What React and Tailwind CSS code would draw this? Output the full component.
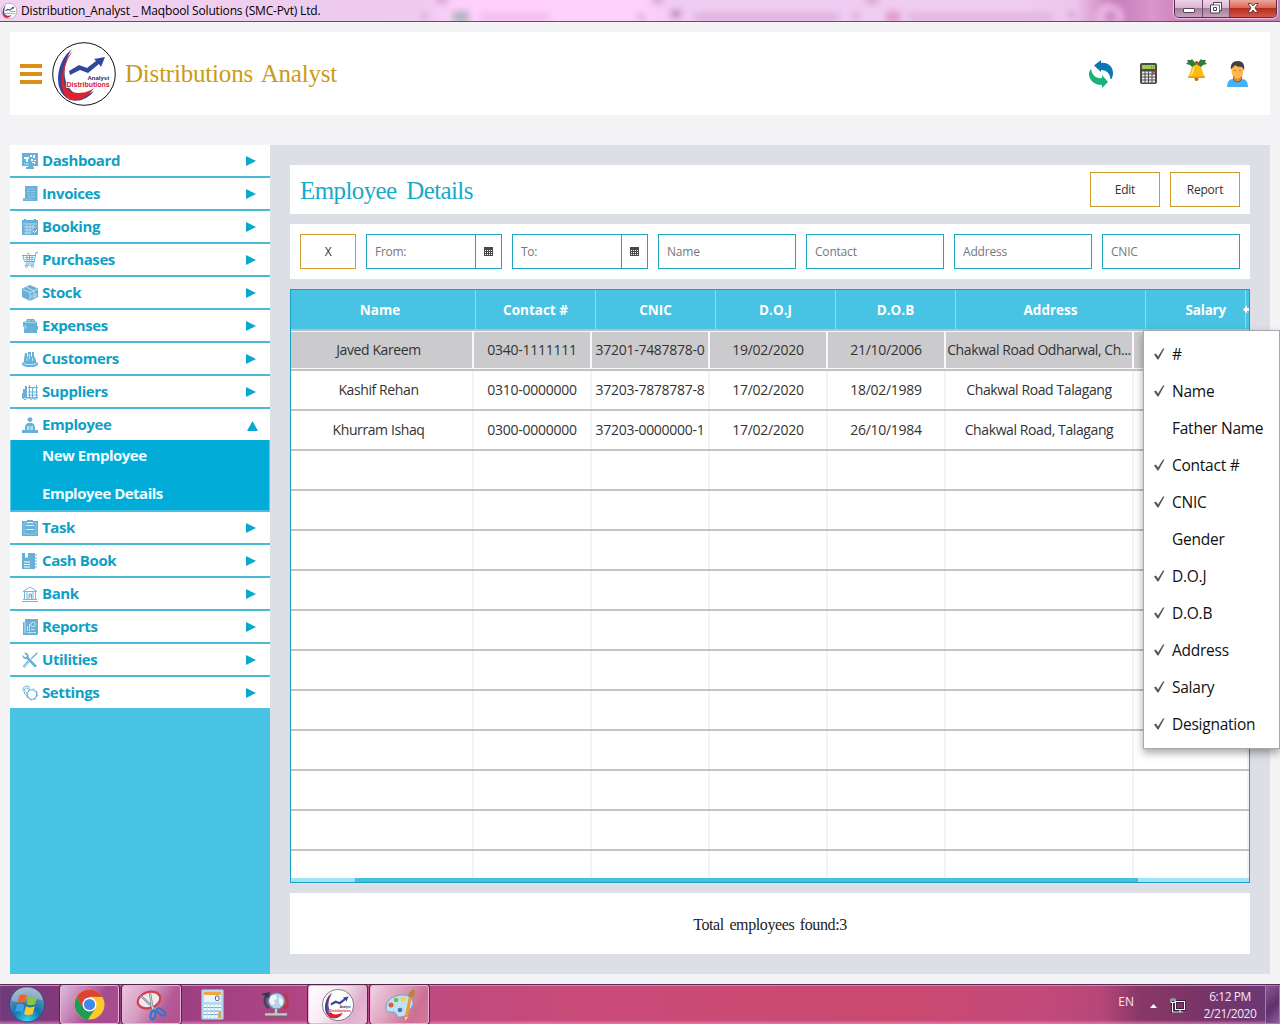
import React from "react";

const Svg = ({ children, className = "w-4 h-4", box = "0 0 16 16" }) => (
  <svg viewBox={box} className={className + " shrink-0"} fill="none">
    {children}
  </svg>
);

const B = "#67b0d8";

const icons = {
  Dashboard: (
    <Svg>
      <path d="M0 0h16v13h-5v1h1v2H4v-2h2v-1H0z" fill={B} />
      <path d="M2 4h5v2H6v3H4V6H2zM8 2h2v2H8zM11 2h2v3h-2zM9 6h2v2H9zM12 7h2v1h-2zM10 9h3v2h-1v-1h-2z" fill="#fff" />
      <path d="M2 11h5" stroke="#b8e0f0" />
    </Svg>
  ),
  Invoices: (
    <Svg>
      <path d="M3 0h12.500v15H1v-3h2z" fill={B} />
      <path d="M5 3h8M5 5.500h3M9 5.500h4M5 8h3M9 8h4M6 10.500h7M1 13h10" stroke="#a5d3ea" strokeWidth=".7" />
    </Svg>
  ),
  Booking: (
    <Svg>
      <path d="M0 1h2V0h2v1h8V0h2v1h2v15H0z" fill={B} />
      <path d="M1 5h14M2 8h12M2 11h9M2 14h7M5 6v9M8 6v9M11 6v4" stroke="#e2f1f8" strokeWidth=".7" />
      <path d="M11 12l1.500 1.500L15 11" stroke="#fff" />
    </Svg>
  ),
  Purchases: (
    <Svg>
      <path d="M16 .5h-2L12 11H3.500M0 3.500h13M1 4l1.500 5.500H12M3 13h9" stroke={B} />
      <path d="M3 5.500h9M3.500 7.500h8M5 3v6M7.500 2v7M10 3v6M5 1.500h2" stroke={B} strokeWidth=".9" />
      <circle cx="4.500" cy="14.300" r="1.200" stroke={B} />
      <circle cx="10.500" cy="14.300" r="1.200" stroke={B} />
    </Svg>
  ),
  Stock: (
    <Svg>
      <path d="M8 0l8 3.500v8.500l-8 4-8-4V3.500z" fill={B} />
      <path d="M.5 4L8 7.500 15.500 4M8 7.500V15.500M4 2l8 4v3M10 10v3M12 9.500v3l2-1v-3z" stroke="#e0f1f9" strokeWidth=".8" />
    </Svg>
  ),
  Expenses: (
    <Svg>
      <path d="M1 4l3-.5L5 1h7l1 2 2 1v4h1v4h-1v3H2V9H1z" fill={B} />
      <path d="M3 4.500h11M6 2.500h2M10 2.500h1M0 8h4v2H2" stroke="#c5e4f2" strokeWidth=".7" />
    </Svg>
  ),
  Customers: (
    <Svg>
      <path d="M3 2h2v3l1 1V1h3v5l1-1V1h2v4l2 4v2l2 1v2l-4 2H4l-4-2v-2l2-1V8z" fill={B} />
      <path d="M5 7v3M7.500 3v5M10.500 7v3M1.500 12.500l3 1h7l3-1" stroke="#e0f1f9" strokeWidth=".8" />
    </Svg>
  ),
  Suppliers: (
    <Svg>
      <path d="M1 5h2V2h2v11h11v1.500H0V9h1z" fill={B} />
      <path d="M7.500 1v12M10.500 3v10M14.500 1v12M6 3.500h10M6 8h10M6 11h10" stroke={B} strokeWidth="1.100" />
      <circle cx="3" cy="14.500" r="1.200" fill="#fff" stroke={B} />
      <circle cx="9" cy="14.500" r="1" fill="#fff" stroke={B} />
      <circle cx="13" cy="14.500" r="1" fill="#fff" stroke={B} />
    </Svg>
  ),
  Employee: (
    <Svg>
      <circle cx="8" cy="2.600" r="2.400" fill={B} />
      <path d="M3 11c0-3 1-5 5-5s5 2 5 5v2h3v3H0v-3h3z" fill={B} />
      <path d="M5 9h6v4H5z" fill="#b5dff0" />
      <path d="M8 9v4" stroke={B} />
    </Svg>
  ),
  Task: (
    <Svg>
      <path d="M0 1h5V0h6v1h5v15H0z" fill={B} />
      <path d="M2 3h12v11H2z" stroke="#a9d6ea" strokeWidth=".7" />
      <path d="M5 2.500h6M4 5.500h8M4 9.500h8" stroke="#d9eef7" />
    </Svg>
  ),
  "Cash Book": (
    <Svg>
      <path d="M0 0h3v5l1.500-1L6 5V0h7v16H0z" fill={B} />
      <path d="M2 9h6M2 11.500h6M2 14h6" stroke="#fff" />
      <path d="M13 2h2M13 5h2M13 8h2M13 11h2M13 14h2" stroke={B} strokeWidth="1.200" />
    </Svg>
  ),
  Bank: (
    <Svg>
      <path d="M1 5.500L8 1l7 4.500zM2.500 6v7M5 6v7M11 6v7M13.500 6v7M1 13.500h14M0 15.500h16" stroke={B} strokeWidth=".9" />
      <path d="M7 13V8h2.500v5M7 10h2" stroke={B} />
    </Svg>
  ),
  Reports: (
    <Svg>
      <path d="M3 0h13v15l-1 1H1V3h2z" fill={B} />
      <path d="M3 3v11M5.500 7v5M7.500 5v7M5 13.500h9M9 10.500h4" stroke="#e0f1f9" strokeWidth=".8" />
      <circle cx="11" cy="5.500" r="2.300" stroke="#e0f1f9" strokeWidth=".8" />
    </Svg>
  ),
  Utilities: (
    <Svg>
      <path d="M2 1l3 3-1.500 1.500L.5 3C0 5 2 7.500 4.500 7L13 15.500 15 14 6.800 5.500C7 2.500 5 .3 2 1z" fill={B} />
      <path d="M15.500.8L9 7" stroke={B} strokeWidth="1.300" />
      <path d="M6.500 9.500L1.500 15" stroke={B} strokeWidth="2.600" />
      <path d="M6 10.500L2 14.500" stroke="#fff" strokeWidth=".8" />
    </Svg>
  ),
  Settings: (
    <Svg>
      <circle cx="10" cy="9.500" r="4.700" stroke={B} strokeWidth="1.100" />
      <circle cx="10" cy="9.500" r="5.600" stroke={B} strokeWidth="1" strokeDasharray="1.800 2.600" />
      <path d="M5.500 11.500L2.500 9V7L.8 5.500l.7-3L4 1l3 .5.500 2M2.800 6.500L2.500 4l1.700-1.200L7 4" stroke={B} strokeWidth=".9" />
    </Svg>
  ),
};

const Logo = ({ className }) => (
  <svg viewBox="0 0 64 64" className={className + " shrink-0 overflow-visible"}>
    <circle cx="32" cy="32" r="31.300" fill="#fff" stroke="#111" strokeWidth="1" />
    <path d="M20 7C3 20 1 50 17 57c9 4 19 0 25-8-8 5-16 6-21 1C9 40 11 20 20 7z" fill="#3b4193" />
    <path d="M21 9C11 21 9 42 16 48c8 5 20 3 26-2-6 9-14 14-24 12C5 52 8 20 21 9z" fill="#dd2231" />
    <path d="M17 29l10-6 8 3 9-7-2-2 11-2-4 10-2-3-11 9-8-3-10 5z" fill="#30489a" />
    <text x="35.500" y="37.500" fontFamily="Liberation Sans" fontWeight="bold" fontSize="6" fill="#242a5e">Analyst</text>
    <text x="14.500" y="45" fontFamily="Liberation Sans" fontWeight="bold" fontSize="7" fill="#d9202c" stroke="#fff" strokeWidth="1.600" paintOrder="stroke">Distributions</text>
  </svg>
);

const TitleBar = () => (
  <div className="relative h-[22px] shrink-0 border-b border-[#6b4a70] bg-[linear-gradient(90deg,#f1d3f0_0%,#eecbee_28%,#eecbf0_33%,#ffd0fc_36%,#ffd0fc_50%,#efccf1_53%,#efccf1_80%,#eec6ec_84%,#c57ab8_87%,#d997cb_90%,#c273b1_94%,#c583b4_100%)]">
    <div className="absolute inset-0 overflow-hidden">
      <div className="absolute inset-0 opacity-60 blur-[3px]">
        <div className="absolute left-[453px] top-[11px] h-3 w-4 bg-[#7fa596]" />
        <div className="absolute left-[480px] top-[13px] h-2 w-[70px] bg-[#e6b2e4]" />
        <div className="absolute left-[637px] top-[13px] h-2 w-2 bg-[#d6a0d0]" />
        <div className="absolute left-[421px] top-[13px] h-2 w-2 bg-[#d6a5d4]" />
        <div className="absolute left-[671px] top-[10px] h-2 w-2.5 bg-[#a566a8]" />
        <div className="absolute left-[694px] top-[13px] h-2 w-[145px] bg-[#d3a0d3]" />
        <div className="absolute left-[852px] top-[12px] h-2 w-2 bg-[#d6a0d0]" />
        <div className="absolute left-[885px] top-[11px] h-3 w-4 rounded-full bg-[#d67fac]" />
        <div className="absolute left-[908px] top-[13px] h-2 w-[145px] bg-[#d8a6d8]" />
        <div className="absolute left-[1068px] top-[11px] h-2 w-2 bg-[#d09aca]" />
        <div className="absolute left-[1096px] top-[3px] h-7 w-7 rounded-full border-[8px] border-[#fbd6f5] bg-[#cf90c4]" />
        <div className="absolute left-[652px] top-[-4px] h-2 w-3 bg-[#c88dbd]" />
        <div className="absolute left-[436px] top-[-4px] h-2 w-3 bg-[#c88dbd]" />
        <div className="absolute left-[866px] top-[-4px] h-2 w-3 bg-[#c88dbd]" />
      </div>
    </div>
    <div className="relative flex h-full items-center gap-[4px] pl-[1px]">
      <Logo className="h-4 w-4" />
      <span className="text-[12px] tracking-[-0.17px] text-black">Distribution_Analyst _ Maqbool Solutions (SMC-Pvt) Ltd.</span>
    </div>
    <div className="absolute right-[3px] top-0 flex h-[18px] w-[103px] overflow-hidden rounded-b-[5px] border border-t-0 border-[#50304c] shadow-[0_0_1px_1px_#f0cbe8]">
      <div className="flex w-[28px] items-center justify-center border-r border-[#6e4868] bg-[linear-gradient(#ecd3e6_0%,#dcb6d2_45%,#a2809c_50%,#c9a1c0_100%)]">
        <div className="mt-1 h-[5px] w-[12px] rounded-[1px] border border-[#55475a] bg-white" />
      </div>
      <div className="flex w-[27px] items-center justify-center border-r border-[#6e4868] bg-[linear-gradient(#ecd3e6_0%,#dcb6d2_45%,#a2809c_50%,#c9a1c0_100%)]">
        <Svg className="mb-[2px] h-3 w-3" box="0 0 12 12">
          <path d="M3.500.5h8v8h-2v2.500h-9v-8h3z" fill="#fff" stroke="#4b4050" />
          <path d="M3.500 5.500h3v3h-3z" stroke="#4b4050" />
          <path d="M9.500 8.500v-5.500h-6" stroke="#4b4050" strokeWidth=".8" />
        </Svg>
      </div>
      <div className="flex flex-1 items-center justify-center bg-[linear-gradient(#eda79a_0%,#d9695a_45%,#b82c1c_50%,#d2574a_100%)]">
        <Svg className="mb-[2px] h-2.5 w-3" box="0 0 12 10">
          <path d="M1 .5h3L6 3 8 .5h3L8 5l3 4.500H8L6 7 4 9.500H1L4 5z" fill="#fff" stroke="#5a3438" strokeWidth=".9" />
        </Svg>
      </div>
    </div>
  </div>
);

const Header = () => (
  <div className="mx-[10px] mt-[10px] flex h-[83px] shrink-0 items-center bg-white pl-[10px]">
    <div className="flex w-[22px] flex-col gap-[4px]">
      <div className="h-[4px] bg-[#dc9018]" />
      <div className="h-[4px] bg-[#dc9018]" />
      <div className="h-[4px] bg-[#dc9018]" />
    </div>
    <Logo className="ml-[10px] h-[64px] w-[64px]" />
    <div className="ml-[9px] whitespace-nowrap pt-[1px] font-['Liberation_Serif',serif] text-[25px] tracking-[-0.2px] [word-spacing:3px] text-[#cb9b16]">Distributions Analyst</div>
    <div className="ml-auto flex items-center pr-[22px]">
      <Svg className="h-7 w-6" box="0 0 24 28">
        <path d="M5 5.500L12 0v3c7-1 12 4 12 10 0 3-1 5-1.500 6h-1C21 13 17 10 12 10v2z" fill="#0d76b5" />
        <path d="M19 22l-6 6v-3C5 25 0 20 0 14c0-2 .8-4 2-5 1 6 5 10 11 9v-3z" fill="#1bb07c" />
      </Svg>
      <Svg className="ml-[27px] h-[21px] w-[17px]" box="0 0 17 21">
        <rect width="17" height="21" rx="2" fill="#4b4b4d" />
        <path d="M2 2h13v4H2z" fill="#a0cc50" />
        <path d="M11 4h3" stroke="#48652c" strokeDasharray="1 1" />
        <path d="M2 9.500h10M2 12.500h13M2 15.500h13M2 18.500h13" stroke="#eee" strokeWidth="2" strokeDasharray="2.500 1" />
        <path d="M12.500 9.500h2.500" stroke="#e15a66" strokeWidth="2" />
      </Svg>
      <Svg className="mb-[8px] ml-[29px] h-[22px] w-[21px]" box="0 0 21 22">
        <path d="M10.500 3C5 3 6 12 2 18h17C15 12 16 3 10.500 3z" fill="#fdbd10" />
        <path d="M10 5L6 0 5 1 1 1l1 2-2 2 4 1 2 2 4.500-3 4.500 3 2-2 4-1-2-2 1-2-4 0-1-1-4 5z" fill="#2b7d3e" />
        <path d="M8 8c-1 3-1 6-3 8" stroke="#ffe27a" strokeWidth="1.500" />
        <path d="M2 17.500h17v1.500H2z" fill="#f19a12" />
        <path d="M8.500 19h4v1a2 2 0 01-4 0z" fill="#bd6c15" />
        <circle cx="10.500" cy="3.800" r="1.800" fill="#e53b2c" />
      </Svg>
      <Svg className="ml-[20px] h-[26px] w-[21px]" box="0 0 21 26">
        <path d="M0 26c0-5 2-8 6-8h9c4 0 6 3 6 8z" fill="#45b2f3" />
        <path d="M6.500 17.500a4 3.500 0 008 0V14h-8z" fill="#e49228" stroke="#40576a" strokeWidth=".8" />
        <ellipse cx="10.500" cy="10" rx="6" ry="7.500" fill="#ffb74d" />
        <path d="M4 9C3 3 6 0 11 0s7 4 6 9l-2-3c-3 0-6-1-7-2-1 2-3 2-4 5z" fill="#443f42" />
        <path d="M7.500 9.500h1M12.500 9.500h1" stroke="#67483c" strokeWidth="1.200" />
      </Svg>
    </div>
  </div>
);

const menuTop = ["Dashboard", "Invoices", "Booking", "Purchases", "Stock", "Expenses", "Customers", "Suppliers", "Employee"];
const menuBottom = ["Task", "Cash Book", "Bank", "Reports", "Utilities", "Settings"];

const NavItem = ({ label, open, line = true }) => (
  <div className={(line ? "h-[33px] border-b-2" : "h-[31px]") + " flex shrink-0 items-center border-[#4bb9d6] bg-white pl-[12px]"}>
    {icons[label]}
    <span className="ml-[4px] text-[15px] font-bold leading-none tracking-[-0.4px] text-[#0f9fc6]">{label}</span>
    {open ? (
      <Svg className="ml-auto mr-[12px] mt-[2px] h-[10px] w-[11px]" box="0 0 11 10">
        <path d="M5.500 0L11 10H0z" fill="#08a8d0" />
      </Svg>
    ) : (
      <Svg className="ml-auto mr-[14px] h-[10px] w-[10px]" box="0 0 10 10">
        <path d="M0 0l10 5-10 5z" fill="#08a8d0" />
      </Svg>
    )}
  </div>
);

const Sidebar = () => (
  <div className="flex w-[260px] shrink-0 flex-col bg-[#48c3e3]">
    {menuTop.map((m) => (
      <NavItem key={m} label={m} open={m === "Employee"} line={m !== "Employee"} />
    ))}
    <div className="flex h-[72px] shrink-0 flex-col border-b-2 border-[#48c0de] bg-[#02acd9]">
      <div className="flex flex-1 flex-col border border-t-0 border-[#60cae5] pl-[31px] text-[15px] font-bold tracking-[-0.5px] text-[#eefbff]">
        <div className="flex h-[30px] items-center">New Employee</div>
        <div className="flex h-[46px] items-center">Employee Details</div>
      </div>
    </div>
    {menuBottom.map((m) => (
      <NavItem key={m} label={m} line={m !== "Settings"} />
    ))}
  </div>
);

const GoldButton = ({ children, className }) => (
  <div className={className + " flex h-[35px] items-center justify-center border border-[#cf9a2c] text-[12px] tracking-[-0.25px] text-[#333]"}>{children}</div>
);

const Field = ({ children }) => (
  <div className="flex h-[35px] w-[138px] items-center border border-[#1fa5bf] pl-[8px] text-[12px] tracking-[-0.2px] text-[#777]">{children}</div>
);

const DateField = ({ children }) => (
  <div className="flex h-[35px] w-[136px] border border-[#1fa5bf] text-[12px] tracking-[-0.3px] text-[#777]">
    <div className="flex flex-1 items-center border-r border-[#1fa5bf] pl-[8px]">{children}</div>
    <div className="flex w-[25px] items-center justify-center">
      <Svg className="h-[9px] w-[9px]" box="0 0 9 9">
        <path d="M0 0h9v9H0z" fill="#48484a" />
        <path d="M1 3.500h7M1 5.500h7M1 7.500h7" stroke="#fff" strokeDasharray="1 1" />
      </Svg>
    </div>
  </div>
);

const headCols = [
  ["Name", "w-[185px] pr-[6px]"],
  ["Contact #", "w-[120px]"],
  ["CNIC", "w-[120px]"],
  ["D.O.J", "w-[120px]"],
  ["D.O.B", "w-[120px]"],
  ["Address", "w-[190px]"],
];
const cellWidths = ["w-[183px] pr-[6px]", "w-[118px]", "w-[118px]", "w-[118px]", "w-[118px]", "w-[188px]"];
const rows = [
  ["Javed Kareem", "0340-1111111", "37201-7487878-0", "19/02/2020", "21/10/2006", "Chakwal Road Odharwal, Ch..."],
  ["Kashif Rehan", "0310-0000000", "37203-7878787-8", "17/02/2020", "18/02/1989", "Chakwal Road Talagang"],
  ["Khurram Ishaq", "0300-0000000", "37203-0000000-1", "17/02/2020", "26/10/1984", "Chakwal Road, Talagang"],
  ...Array.from({ length: 11 }, () => ["", "", "", "", "", ""]),
];
const cellTracking = ["tracking-[-0.4px]", "", "", "", "", "tracking-[-0.4px]"];

const Table = () => (
  <div className="mt-[10px] flex h-[594px] shrink-0 flex-col overflow-hidden border border-[#1b9fc6]">
    <div className="flex h-[41px] shrink-0 border-b-2 border-[#b5c1c6] bg-[#48c3e3] text-[13.5px] font-bold text-white">
      {headCols.map(([h, w]) => (
        <div key={h} className={w + " flex shrink-0 items-center justify-center border-r border-[#a9cfd9] pt-[2px]"}>{h}</div>
      ))}
      <div className="flex w-[100px] shrink-0 items-center justify-end border-r border-[#a9cfd9] pr-[19px] pt-[2px] tracking-[-0.2px]">Salary</div>
      <div className="-ml-[3px] flex items-center">
        <Svg className="h-[9px] w-[6px]" box="0 0 6 9">
          <path d="M0 4.500L4 .5v2.500h2v3H4v2.500z" fill="#fff" />
        </Svg>
      </div>
    </div>
    <div className="h-[547px] shrink-0 overflow-hidden bg-white text-[14px] tracking-[-0.27px] text-[#333]">
      {rows.map((r, i) => (
        <div key={i} className={(i === 0 ? "bg-[#cbcbcd]" : "bg-white") + " flex h-[40px] border-b-2 border-[#c3c3c7]"}>
          {r.map((c, j) => (
            <div key={j} className={cellWidths[j] + (i === 0 ? " border-[#f8f8fa] border-y" : " border-[#f3f3f7]") + " flex shrink-0 items-center justify-center whitespace-nowrap border-r-2 pb-[2px]"}>
              <span className={cellTracking[j]}>{c}</span>
            </div>
          ))}
          <div className={(i === 0 ? "border-y border-[#f8f8fa] " : "border-r-2 border-[#f3f3f7] ") + "flex-1"} />
        </div>
      ))}
    </div>
    <div className="flex h-[5px] shrink-0 bg-[#a0e3f3]">
      <div className="ml-[64px] w-[783px] bg-[#43bfdf]" />
    </div>
  </div>
);

const columnMenu = [
  ["#", true],
  ["Name", true],
  ["Father Name", false],
  ["Contact #", true],
  ["CNIC", true],
  ["Gender", false],
  ["D.O.J", true],
  ["D.O.B", true],
  ["Address", true],
  ["Salary", true],
  ["Designation", true],
];

const ColumnMenu = () => (
  <div className="absolute left-[1143px] top-[330px] h-[419px] w-[137px] border border-[#a8a8ac] bg-white pt-[5px] text-[15.5px] tracking-[-0.25px] text-[#111] shadow-[0_4px_8px_rgba(0,0,0,0.35)]">
    {columnMenu.map(([t, on]) => (
      <div key={t} className="flex h-[37px] items-center whitespace-nowrap pl-[10px]">
        <div className="w-[18px]">
          {on && (
            <Svg className="mb-[2px] h-[12px] w-[11px]" box="0 0 11 12">
              <path d="M0 6.500l2-1 2 3L9 .5h1.500L4.500 11.500H3.500z" fill="#57575b" />
            </Svg>
          )}
        </div>
        <span className="pt-[1px]">{t}</span>
      </div>
    ))}
  </div>
);

const TaskButton = ({ children, className = "" }) => (
  <div className={className + " flex h-[39px] w-[59px] shrink-0 items-center justify-center rounded-[3px] border border-[#e8b4d3] shadow-[0_0_0_1px_#54244a]"}>{children}</div>
);

const Taskbar = () => (
  <div className="mt-auto flex h-[40px] shrink-0 items-center border-t border-[#5d2b58] bg-[linear-gradient(90deg,#6f3a7c_0%,#86397c_5%,#a94383_20%,#bb4a82_30%,#c94b78_45%,#cb4970_70%,#c2497a_82%,#b64779_86%,#8a3866_89%,#773468_94%,#673a78_100%)] shadow-[inset_0_1px_0_#c98cb8,inset_0_-3px_3px_-1px_rgba(255,150,210,0.6)]">
    <Svg className="ml-[8px] h-[37px] w-[38px]" box="0 0 38 38">
      <defs>
        <radialGradient id="orb" cx=".5" cy=".95" r=".9">
          <stop offset="0" stopColor="#35d5f4" />
          <stop offset=".45" stopColor="#1372ac" />
          <stop offset="1" stopColor="#839bb9" />
        </radialGradient>
      </defs>
      <circle cx="19" cy="19" r="18" fill="url(#orb)" stroke="#304d78" />
      <path d="M3 15a16 14 0 0132 0c-8-5-24 5-32 0z" fill="#fff" opacity=".3" />
      <path d="M11 10c3-2 5-1 8 0l-2 8c-3-2-5-2-8 0z" fill="#f0642b" />
      <path d="M20.500 10.500c3 2 5 2 9 0l-2 8c-4 2-6 2-9 0z" fill="#8cc63e" />
      <path d="M8.500 19.500c3-2 5-1 8 0l-2 8c-3-2-5-2-8 0z" fill="#3fa0e8" />
      <path d="M18 20.500c3 2 5 2 9 0l-2 8c-4 2-6 2-9 0z" fill="#fdc92c" />
    </Svg>
    <TaskButton className="ml-[14px] bg-[linear-gradient(120deg,#dcbcd8_0%,#c686b9_30%,#a44c91_60%,#aa4c92_100%)]">
      <Svg className="h-[31px] w-[31px]" box="0 0 32 32">
        <circle cx="16" cy="16" r="15.500" fill="#fdc92b" />
        <path d="M2.600 8.300A15.500 15.500 0 0014.500 31.400L22 20 10 19z" fill="#1e9c57" />
        <path d="M2.600 8.300A15.500 15.500 0 0129.400 8.300L16 8 10 20z" fill="#dc4534" />
        <circle cx="16" cy="16" r="7.200" fill="#fff" />
        <circle cx="16" cy="16" r="5.800" fill="#4486ee" />
      </Svg>
    </TaskButton>
    <TaskButton className="ml-[3px] bg-[linear-gradient(120deg,#eac8df_0%,#d49abf_40%,#b65998_70%,#b3528f_100%)]">
      <Svg className="h-[32px] w-[32px]" box="0 0 32 32">
        <ellipse cx="13" cy="11" rx="11.500" ry="8" transform="rotate(-18 13 11)" fill="#f1e9ed" stroke="#d43e4c" strokeWidth="2.200" />
        <path d="M5 7l16 15M14 4l3 19" stroke="#737b83" strokeWidth="2.200" />
        <path d="M5 7l16 15M14 4l3 19" stroke="#dae2e8" strokeWidth=".9" />
        <ellipse cx="17" cy="26" rx="2.300" ry="4.500" stroke="#2d78c8" strokeWidth="2.200" transform="rotate(12 17 26)" />
        <ellipse cx="25" cy="23" rx="2.300" ry="5" stroke="#2d78c8" strokeWidth="2.200" transform="rotate(-52 25 23)" />
      </Svg>
    </TaskButton>
    <Svg className="ml-[20px] h-[31px] w-[23px]" box="0 0 23 31">
      <rect x=".5" y=".5" width="22" height="30" rx="1.500" fill="#b1d9ef" stroke="#78abcd" />
      <path d="M3 3h17v3H3z" fill="#f0a743" />
      <path d="M3 6h17v7H3z" fill="#eaf5fb" />
      <rect x="14.500" y="7" width="3.500" height="4.500" rx="1" stroke="#4b6c89" />
      <path d="M3 17h17M3 20.500h17M3 24h17M3 27.500h14" stroke="#fff" strokeWidth="2.400" strokeDasharray="2.600 1" />
      <path d="M3 18.500h17M3 22h17M3 25.500h17" stroke="#5b97c3" strokeWidth=".8" strokeDasharray="2.600 1" />
      <path d="M17.500 23h2.500v6h-2.500z" fill="#efa042" />
    </Svg>
    <Svg className="ml-[37px] h-[27px] w-[30px]" box="0 0 30 27">
      <path d="M7 3C3 6 2 13 8 17" stroke="#334a5e" strokeWidth="2.500" />
      <path d="M0 3l9-2-1 6z" fill="#273b50" />
      <path d="M23 3c4 3 5 9 2 13" stroke="#c03347" strokeWidth="2.200" />
      <path d="M21 14l8 0-5 5z" fill="#ca2e42" />
      <circle cx="15.500" cy="10" r="8" fill="#b4d5e9" stroke="#658ba9" />
      <path d="M10 5l5-1 1 4-3 1 1 4-3 1-3-4zM18 6l4 3-1 6-3-3z" fill="#eff7fa" />
      <path d="M15 18v5M4 23.500h22" stroke="#c8c8c4" strokeWidth="2.400" />
      <path d="M4 25.200h22" stroke="#69666a" />
    </Svg>
    <TaskButton className="ml-[17px] bg-[linear-gradient(120deg,#fff_0%,#f9e9f2_40%,#deafcd_75%,#e8bcd6_100%)]">
      <Logo className="h-[32px] w-[32px]" />
    </TaskButton>
    <TaskButton className="ml-[3px] bg-[linear-gradient(120deg,#eed3e2_0%,#dea3bd_40%,#cd6f94_75%,#d17b9c_100%)]">
      <Svg className="h-[32px] w-[32px]" box="0 0 32 32">
        <path d="M2 20C1 10 12 5 21 6c8 1 10 9 6 13-3 3-3 8-10 9-5 1-4-4-7-5-4 0-7 1-8-3z" fill="#c3e0f1" stroke="#6f9fc2" />
        <circle cx="7" cy="16" r="2.500" fill="#dd5a44" />
        <circle cx="12" cy="11" r="2.300" fill="#6fbc4a" />
        <circle cx="19" cy="10" r="2.500" fill="#eed05a" />
        <circle cx="16" cy="21" r="2.300" fill="#4676c4" />
        <path d="M27 5l-5 24" stroke="#eb9a35" strokeWidth="3" />
        <path d="M24 7c1-4 3-6 6-7l1 1c0 3 0 6-3 8z" fill="#b8834a" />
        <path d="M21 28l3 0-3 4z" fill="#f2d6a2" />
      </Svg>
    </TaskButton>
    <div className="ml-auto flex h-full items-center text-[12px] text-[#f8e5f4]">
      <span className="mb-[5px] mr-[16px]">EN</span>
      <Svg className="mr-[13px] mt-[2px] h-[4px] w-[7px]" box="0 0 7 4">
        <path d="M3.500 0L7 4H0z" fill="#fff" />
      </Svg>
      <Svg className="mr-[17px] mt-[2px] h-[15px] w-[16px]" box="0 0 16 15">
        <path d="M5.500 3.500h9v8h-9zM10 11.500v2M7 14h6M2.500 5v9H7M1 .5v4h4v-4M3 0v3" stroke="#28152d" strokeWidth="2.500" />
        <path d="M5.500 3.500h9v8h-9zM10 11.500v2M7 14h6M2.500 5v9H7M1 .5v4h4v-4M3 0v3" stroke="#fff" strokeWidth="1.100" />
      </Svg>
      <div className="mr-[8px] w-[54px] whitespace-nowrap text-center leading-[17px] tracking-[-0.45px]">
        <div>6:12 PM</div>
        <div className="-mx-[2px]">2/21/2020</div>
      </div>
      <div className="h-full w-[15px] border border-[#a879b2] bg-[linear-gradient(135deg,#8c5995,#5d316b_55%,#8d5c99)]" />
    </div>
  </div>
);

export default function App() {
  return (
    <div className="relative flex h-[1024px] w-[1280px] flex-col overflow-hidden bg-[#f4f3f6] font-['Open_Sans','Noto_Sans',sans-serif]">
      <TitleBar />
      <Header />
      <div className="mx-[10px] mt-[30px] flex h-[829px] shrink-0">
        <Sidebar />
        <div className="flex flex-1 flex-col bg-[#dcdfe6] px-[20px] pt-[20px]">
          <div className="flex h-[49px] shrink-0 items-center bg-white px-[10px]">
            <div className="whitespace-nowrap pt-[2px] font-['Liberation_Serif',serif] text-[25px] tracking-[-0.6px] [word-spacing:4px] text-[#18a9cc]">Employee Details</div>
            <GoldButton className="ml-auto w-[70px]">Edit</GoldButton>
            <GoldButton className="ml-[10px] w-[70px]">Report</GoldButton>
          </div>
          <div className="mt-[10px] flex h-[55px] shrink-0 items-center gap-[10px] bg-white px-[10px]">
            <GoldButton className="w-[56px]">X</GoldButton>
            <DateField>From:</DateField>
            <DateField>To:</DateField>
            <Field>Name</Field>
            <Field>Contact</Field>
            <Field>Address</Field>
            <Field>CNIC</Field>
          </div>
          <Table />
          <div className="mt-[10px] flex h-[61px] shrink-0 items-center justify-center bg-white pt-[2px] font-['Liberation_Serif',serif] text-[16px] tracking-[-0.4px] [word-spacing:2px] text-[#222]">
            Total employees found:3
          </div>
        </div>
      </div>
      <Taskbar />
      <ColumnMenu />
    </div>
  );
}
